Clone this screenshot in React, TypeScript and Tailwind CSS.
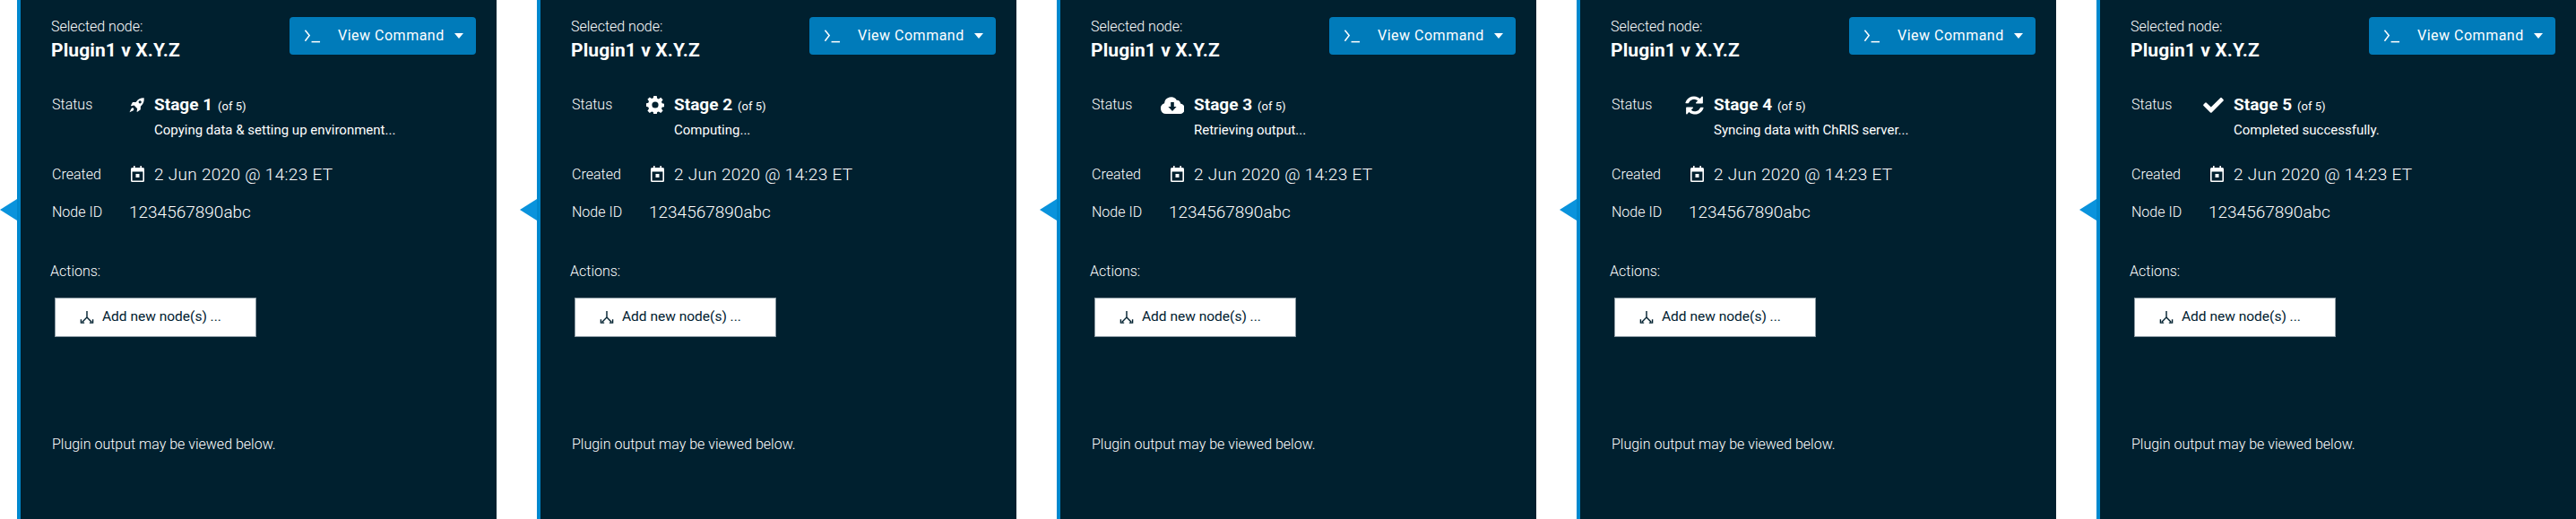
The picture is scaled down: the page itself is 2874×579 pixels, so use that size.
const STAGES = [
  { n: 1, text: 'Copying data & setting up environment...', icon: 'rocket' },
  { n: 2, text: 'Computing...', icon: 'gear' },
  { n: 3, text: 'Retrieving output...', icon: 'cloud' },
  { n: 4, text: 'Syncing data with ChRIS server...', icon: 'sync' },
  { n: 5, text: 'Completed successfully.', icon: 'check' },
]

function StageIcon({ name }: { name: string }) {
  if (name === 'rocket') {
    return (
      <svg viewBox="0 0 17 17" className="w-[17px] h-[17px] fill-white">
        <path
          fillRule="evenodd"
          d="M16.7.3c.3 3.7-.7 6.6-3.3 9l-.5.4-.1 3.2c0 .3-.2.6-.4.7l-3.1 2.1c-.4.2-.8-.1-.7-.5l.6-3-3.6-3.6-3 .6c-.4.1-.7-.3-.5-.7L3.7 5.4c.1-.2.4-.4.7-.4l3.2-.1.4-.5C10.4 1.2 13 .1 16.7.3zM12.2 3.2a1.6 1.6 0 1 0 0 3.2 1.6 1.6 0 0 0 0-3.2z"
        />
        <path d="M3.4 11.4c1-.3 1.8.5 1.9 1.3.1 1-.7 1.6-1.6 2L.5 16.3l1.4-3c.3-.8.8-1.6 1.5-1.9z" />
      </svg>
    )
  }
  if (name === 'gear') {
    return (
      <svg viewBox="0 0 20 20" className="w-[20px] h-[20px] fill-white">
        <path
          fillRule="evenodd"
          d="M8.3 0h3.4l.5 2.7 1.7.7 2.3-1.6 2.4 2.4-1.6 2.3.7 1.7 2.7.5v3.4l-2.7.5-.7 1.7 1.6 2.3-2.4 2.4-2.3-1.6-1.7.7-.5 2.7H8.3l-.5-2.7-1.7-.7-2.3 1.6-2.4-2.4 1.6-2.3-.7-1.7L-.4 11.7V8.3l2.7-.5.7-1.7L1.4 3.8l2.4-2.4 2.3 1.6 1.7-.7L8.3 0zM10 6.4a3.6 3.6 0 1 0 0 7.2 3.6 3.6 0 0 0 0-7.2z"
        />
      </svg>
    )
  }
  if (name === 'cloud') {
    return (
      <svg viewBox="0 0 26 19" className="w-[26px] h-[19px] fill-white">
        <path
          fillRule="evenodd"
          d="M6 19a6 6 0 0 1-1.9-11.7A7.5 7.5 0 0 1 18 3.9 3.5 3.5 0 0 1 22 7.4 5.8 5.8 0 0 1 20.2 19H6zM11.2 6v5H8.4l4.6 5 4.6-5h-2.8V6h-3.6z"
        />
      </svg>
    )
  }
  if (name === 'sync') {
    return (
      <svg viewBox="0 0 21 21" className="w-[21px] h-[21px] fill-white">
        <path d="M19.9 1.2v6.6c0 .4-.3.7-.7.7h-6.6c-.6 0-.9-.7-.5-1.1l2.1-2.1a6.6 6.6 0 0 0-10.3 2.6c-.1.2-.3.3-.5.3H.9c-.3 0-.6-.3-.5-.6A10 10 0 0 1 16.7 3l1.9-2.3c.5-.4 1.3-.1 1.3.5z" />
        <path d="M1.1 19.8v-6.6c0-.4.3-.7.7-.7h6.6c.6 0 .9.7.5 1.1l-2.1 2.1a6.6 6.6 0 0 0 10.3-2.6c.1-.2.3-.3.5-.3h2.5c.3 0 .6.3.5.6A10 10 0 0 1 4.3 18l-1.9 2.3c-.5.4-1.3.1-1.3-.5z" />
      </svg>
    )
  }
  return (
    <svg viewBox="0 0 23 18" className="w-[23px] h-[18px] fill-white">
      <path d="M8 17.5.5 10a1.2 1.2 0 0 1 0-1.6l1.7-1.7a1.2 1.2 0 0 1 1.6 0L8.8 11.6 19.2 1.2a1.2 1.2 0 0 1 1.6 0l1.7 1.7a1.2 1.2 0 0 1 0 1.6L9.6 17.5a1.2 1.2 0 0 1-1.6 0z" />
    </svg>
  )
}

function Panel({ stage }: { stage: (typeof STAGES)[number] }) {
  return (
    <div className="relative w-[535px] h-[579px] shrink-0 bg-[#00202f] border-l-[4px] border-[#0088ce] text-white font-['Roboto',sans-serif]">
      {/* pointer */}
      <div className="absolute left-[-23px] top-[222px] w-0 h-0 border-y-[12px] border-y-transparent border-r-[19px] border-r-[#0a93dc]" />

      {/* Header */}
      <div className="flex justify-between pt-[19px] pl-[34px] pr-[23px]">
        <div>
          <div className="h-[20px] mt-[1px] text-[16px] leading-[20px] font-light">Selected node:</div>
          <div className="text-[21px] leading-[28px] mt-[2px] font-bold tracking-[0.1px]">Plugin1 v X.Y.Z</div>
        </div>
        <button className="w-[208px] h-[42px] flex items-center pl-[16px] bg-[#007bba] rounded-[4px] text-[16px] text-white tracking-[0.5px]">
          <svg viewBox="0 0 20 16" className="w-[19px] h-[16px] fill-none stroke-white stroke-[1.6]">
            <path d="M1.5 1.5 6.5 7.5 1.5 14" />
            <path d="M9 15h10" />
          </svg>
          <span className="ml-[19px]">View Command</span>
          <span className="ml-[11px] w-0 h-0 border-x-[5px] border-x-transparent border-t-[6px] border-t-white" />
        </button>
      </div>

      {/* Status */}
      <div className="flex mt-[35px] pl-[35px]">
        <div className="w-[70px] text-[16px] leading-[24px] font-light">Status</div>
        <div className="w-[33px] h-[24px] flex items-center justify-end">
          <StageIcon name={stage.icon} />
        </div>
        <div className="ml-[11px]">
          <div className="h-[24px] leading-[24px]">
            <span className="text-[19px] font-bold">Stage {stage.n}</span>
            <span className="ml-[6px] text-[13px]">(of 5)</span>
          </div>
          <div className="mt-[6px] text-[15px] leading-[20px]">{stage.text}</div>
        </div>
      </div>

      {/* Created */}
      <div className="flex items-center mt-[28px] pl-[35px] h-[24px]">
        <div className="w-[70px] text-[16px] font-light">Created</div>
        <div className="w-[33px] flex justify-end -mt-[2px]">
          <svg viewBox="0 0 15 18" className="w-[15px] h-[18px] fill-white">
            <path
              fillRule="evenodd"
              d="M3 0h1.6v2h5.8V0H12v2h1.5A1.5 1.5 0 0 1 15 3.5v13a1.5 1.5 0 0 1-1.5 1.5h-12A1.5 1.5 0 0 1 0 16.5v-13A1.5 1.5 0 0 1 1.5 2H3V0zM1.6 6.5v9.9h11.8V6.5H1.6zm3.9 2.5h4v4h-4V9z"
            />
          </svg>
        </div>
        <div className="ml-[11px] text-[19px] font-light tracking-[0.3px]">2 Jun 2020 @ 14:23 ET</div>
      </div>

      {/* Node ID */}
      <div className="flex items-center mt-[18px] pl-[35px] h-[24px]">
        <div className="w-[86px] text-[16px] font-light">Node ID</div>
        <div className="text-[19px] font-light">1234567890abc</div>
      </div>

      {/* Actions */}
      <div className="mt-[42px] pl-[33px] text-[16px] leading-[24px] font-light">Actions:</div>
      <button className="flex items-center ml-[38px] mt-[17px] w-[225px] h-[44px] pl-[27px] bg-white border border-[#8b9aa3] text-[#00202f] text-[15.5px]">
        <svg viewBox="0 0 17 17" className="w-[16px] h-[16px] fill-none stroke-[#00202f] stroke-[1.5]">
          <path d="M8.5 1v7.5L3 14M8.5 8.5 14 14M1.5 11v4h4M15.5 11v4h-4" />
        </svg>
        <span className="ml-[9px]">Add new node(s) ...</span>
      </button>

      {/* Footer note */}
      <div className="mt-[108px] pl-[35px] text-[16px] leading-[24px] font-light">
        Plugin output may be viewed below.
      </div>
    </div>
  )
}

export default function App() {
  return (
    <div className="flex gap-[45px] w-[2874px] h-[579px] pl-[19px] bg-white overflow-hidden">
      {STAGES.map((stage) => (
        <Panel key={stage.n} stage={stage} />
      ))}
    </div>
  )
}
